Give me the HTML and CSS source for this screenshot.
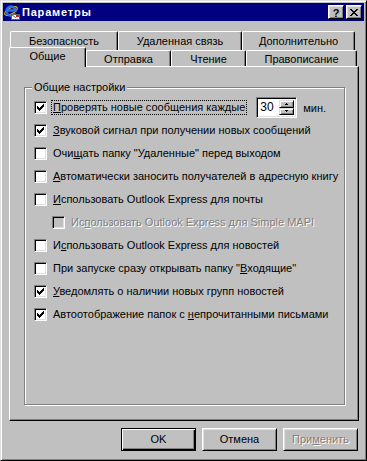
FILE: index.html
```html
<!DOCTYPE html>
<html lang="ru">
<head>
<meta charset="utf-8">
<title>Параметры</title>
<link rel="stylesheet" href="styles.css">
</head>
<body>
<div class="window">
  <div class="titlebar">
    <svg class="app-icon" viewBox="0 0 16 16" width="16" height="16">
      <ellipse cx="7" cy="7" rx="7" ry="3" fill="none" stroke="#e8b800" stroke-width="1.2" transform="rotate(-30 7 7)"/>
      <path d="M11.2 9.2 A4.6 4.6 0 1 1 11.6 6.5 H3.5" fill="none" stroke="#2a6ee0" stroke-width="2.4"/>
      <rect x="7.5" y="10.5" width="8" height="5" fill="#fff" stroke="#606060" stroke-width="1"/>
      <path d="M7.5 10.5 L11.5 13.5 L15.5 10.5" fill="none" stroke="#606060" stroke-width="1"/>
      <rect x="12" y="11" width="3" height="2" fill="#d02020"/>
    </svg>
    <span class="title">Параметры</span>
    <div class="title-btns">
      <div class="tbtn help">?</div>
      <div class="tbtn close">
        <svg viewBox="0 0 8 7" width="8" height="7" shape-rendering="crispEdges"><path d="M0 0h2v1h1v1h2v-1h1v-1h2v1h-1v1h-1v1h-1v1h1v1h1v1h1v1h-2v-1h-1v-1h-2v1h-1v1h-2v-1h1v-1h1v-1h1v-1h-1v-1h-1v-1h-1z" fill="#000"/></svg>
      </div>
    </div>
  </div>

  <div class="body">
    <div class="tabrow back">
      <div class="tab t-sec">Безопасность</div>
      <div class="tab t-remote">Удаленная связь</div>
      <div class="tab t-adv">Дополнительно</div>
    </div>
    <div class="tabrow front">
      <div class="tab t-general selected">Общие</div>
      <div class="tab t-send">Отправка</div>
      <div class="tab t-read">Чтение</div>
      <div class="tab t-spell">Правописание</div>
    </div>

    <div class="panel">
      <div class="group">
        <div class="group-label">Общие настройки</div>
        <div class="rows">
          <div class="row">
            <span class="cb checked"><svg viewBox="0 0 7 7" width="7" height="7" shape-rendering="crispEdges"><path d="M0 2H1V3H2V4H3V3H4V2H5V1H6V0H7V3H6V4H5V5H4V6H3V7H2V6H1V5H0Z"/></svg></span>
            <span class="lbl focus"><u>П</u>роверять новые сообщения каждые</span>
            <div class="spin">
              <span class="spin-val">30</span>
              <div class="spin-btns">
                <div class="sbtn"><svg viewBox="0 0 3 2" width="3" height="2" shape-rendering="crispEdges"><path d="M1 0H2V1H3V2H0V1H1Z"/></svg></div>
                <div class="sbtn"><svg viewBox="0 0 3 2" width="3" height="2" shape-rendering="crispEdges"><path d="M0 0H3V1H2V2H1V1H0Z"/></svg></div>
              </div>
            </div>
            <span class="unit">мин.</span>
          </div>
          <div class="row">
            <span class="cb checked"><svg viewBox="0 0 7 7" width="7" height="7" shape-rendering="crispEdges"><path d="M0 2H1V3H2V4H3V3H4V2H5V1H6V0H7V3H6V4H5V5H4V6H3V7H2V6H1V5H0Z"/></svg></span>
            <span class="lbl"><u>З</u>вуковой сигнал при получении новых сообщений</span>
          </div>
          <div class="row">
            <span class="cb"></span>
            <span class="lbl">Очи<u>щ</u>ать папку "Удаленные" перед выходом</span>
          </div>
          <div class="row">
            <span class="cb"></span>
            <span class="lbl"><u>А</u>втоматически заносить получателей в адресную книгу</span>
          </div>
          <div class="row">
            <span class="cb"></span>
            <span class="lbl"><u>И</u>спользовать Outlook Express для почты</span>
          </div>
          <div class="row indent">
            <span class="cb disabled"></span>
            <span class="lbl disabled">Ис<u>п</u>ользовать Outlook Express для Simple MAPI</span>
          </div>
          <div class="row">
            <span class="cb"></span>
            <span class="lbl">И<u>с</u>пользовать Outlook Express для новостей</span>
          </div>
          <div class="row">
            <span class="cb"></span>
            <span class="lbl">При запуске сразу открывать папку "<u>В</u>ходящие"</span>
          </div>
          <div class="row">
            <span class="cb checked"><svg viewBox="0 0 7 7" width="7" height="7" shape-rendering="crispEdges"><path d="M0 2H1V3H2V4H3V3H4V2H5V1H6V0H7V3H6V4H5V5H4V6H3V7H2V6H1V5H0Z"/></svg></span>
            <span class="lbl"><u>У</u>ведомлять о наличии новых групп новостей</span>
          </div>
          <div class="row">
            <span class="cb checked"><svg viewBox="0 0 7 7" width="7" height="7" shape-rendering="crispEdges"><path d="M0 2H1V3H2V4H3V3H4V2H5V1H6V0H7V3H6V4H5V5H4V6H3V7H2V6H1V5H0Z"/></svg></span>
            <span class="lbl">Автоотображение папок с <u>н</u>епрочитанными письмами</span>
          </div>
        </div>
      </div>
    </div>

    <div class="buttons">
      <div class="btn default">OK</div>
      <div class="btn">Отмена</div>
      <div class="btn disabled">При<u>м</u>енить</div>
    </div>
  </div>
</div>
</body>
</html>
```
FILE: styles.css
```css
* { box-sizing: border-box; }
html, body { margin: 0; padding: 0; }
body {
  width: 367px;
  height: 461px;
  overflow: hidden;
  background: #c0c0c0;
  font-family: "Liberation Sans", Arial, sans-serif;
  font-size: 11px;
  color: #000;
}
u { text-decoration: underline; text-underline-offset: 1px; text-decoration-thickness: 1px; }

.window {
  width: 367px;
  height: 461px;
  background: #c0c0c0;
  border: 1px solid;
  border-color: #dfdfdf #000 #000 #dfdfdf;
  box-shadow: inset 1px 1px #fff, inset -1px -1px #808080;
  padding: 2px;
  display: flex;
  flex-direction: column;
}

/* title bar */
.titlebar {
  height: 18px;
  flex: none;
  background: #000080;
  color: #fff;
  display: flex;
  align-items: center;
  padding: 0 2px 0 1px;
}
.app-icon { flex: none; margin-right: 2px; }
.title {
  font-weight: bold;
  font-size: 11px;
  letter-spacing: 0.8px;
  flex: 1;
}
.title-btns { display: flex; gap: 2px; }
.tbtn {
  width: 16px;
  height: 14px;
  background: #c0c0c0;
  border: 1px solid;
  border-color: #fff #000 #000 #fff;
  box-shadow: inset 1px 1px #dfdfdf, inset -1px -1px #808080;
  color: #000;
  display: flex;
  align-items: center;
  justify-content: center;
  font-weight: bold;
  font-size: 11px;
  line-height: 12px;
}
.tbtn.help { padding-top: 1px; }

/* body */
.body {
  flex: 1;
  display: flex;
  flex-direction: column;
  padding-top: 10px;
}

/* tabs */
.tabrow { display: flex; flex: none; }
.tabrow.back { height: 19px; margin-left: 7px; }
.tabrow.front { height: 16px; margin-left: 6px; align-items: flex-end; }
.tab {
  background: #c0c0c0;
  border-left: 1px solid #fff;
  border-top: 1px solid #fff;
  border-right: 1px solid #000;
  border-top-left-radius: 2px;
  border-top-right-radius: 2px;
  box-shadow: inset -1px 0 #808080;
  text-align: center;
  line-height: 13px;
  white-space: nowrap;
}
.tabrow.back .tab { height: 19px; padding-top: 3px; }
.tabrow.front .tab { height: 16px; padding-top: 2px; }
.tabrow.front .tab.selected {
  height: 20px;
  margin-bottom: -1px;
  padding-top: 2px;
  position: relative;
  z-index: 1;
}
.t-sec { width: 108px; }
.t-remote { width: 124px; }
.t-adv { width: 113px; }
.t-general { width: 77px; }
.t-send { width: 85px; }
.t-read { width: 75px; }
.t-spell { width: 111px; }

/* panel */
.panel {
  flex: none;
  margin-left: 6px;
  width: 350px;
  height: 355px;
  border-left: 1px solid #fff;
  border-top: 1px solid #fff;
  border-right: 1px solid #000;
  border-bottom: 1px solid #000;
  box-shadow: inset -1px -1px #808080;
  padding: 20px 0 0 14px;
}

.group {
  width: 321px;
  height: 318px;
  border: 1px solid #808080;
  box-shadow: inset 1px 1px #fff, 1px 1px #fff;
  padding-left: 9px;
}
.group-label {
  margin: -7px 0 0 -2px;
  padding: 0 2px;
  width: fit-content;
  background: #c0c0c0;
  line-height: 13px;
}
.rows { margin-top: 2px; }
.row {
  display: flex;
  align-items: center;
  height: 23px;
}
.row.indent { padding-left: 18px; }

.cb {
  flex: none;
  width: 13px;
  height: 13px;
  background: #fff;
  border: 1px solid;
  border-color: #808080 #fff #fff #808080;
  box-shadow: inset 1px 1px #000, inset -1px -1px #dfdfdf;
  display: flex;
  align-items: center;
  justify-content: center;
}
.cb svg { fill: #000; display: block; }
.cb.disabled { background: #c0c0c0; }

.lbl {
  margin-left: 4px;
  padding: 0 1px;
  border: 1px dotted transparent;
  line-height: 13px;
  white-space: nowrap;
}
.lbl.focus { border-color: #000; }
.lbl.disabled { color: #808080; text-shadow: 1px 1px 0 #fff; }

.spin {
  margin-left: 9px;
  width: 41px;
  height: 21px;
  background: #fff;
  border: 1px solid;
  border-color: #808080 #fff #fff #808080;
  box-shadow: inset 1px 1px #000, inset -1px -1px #dfdfdf;
  display: flex;
  padding: 2px;
}
.spin-val { flex: 1; padding-left: 1px; line-height: 15px; font-size: 12px; }
.spin-btns { display: flex; flex-direction: column; width: 15px; }
.sbtn {
  flex: 1;
  background: #c0c0c0;
  border: 1px solid;
  border-color: #dfdfdf #000 #000 #dfdfdf;
  box-shadow: inset 1px 1px #fff, inset -1px -1px #808080;
  display: flex;
  align-items: center;
  justify-content: center;
}
.sbtn svg { fill: #000; display: block; }
.unit { margin-left: 6px; }

/* buttons */
.buttons {
  flex: none;
  display: flex;
  justify-content: flex-end;
  gap: 6px;
  margin-top: 7px;
  padding-right: 6px;
}
.btn {
  width: 75px;
  height: 23px;
  border: 1px solid;
  border-color: #fff #000 #000 #fff;
  box-shadow: inset 1px 1px #dfdfdf, inset -1px -1px #808080;
  display: flex;
  align-items: center;
  justify-content: center;
  line-height: 13px;
}
.btn.default {
  border-color: #000;
  box-shadow: inset 1px 1px #fff, inset -1px -1px #000, inset -2px -2px #808080;
}
.btn.disabled { color: #808080; text-shadow: 1px 1px 0 #fff; }
```
